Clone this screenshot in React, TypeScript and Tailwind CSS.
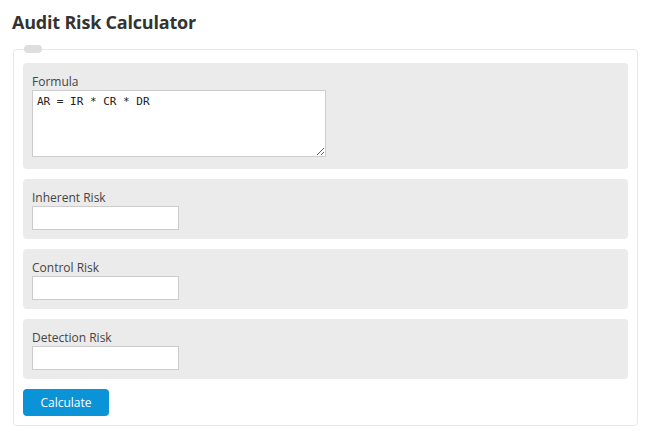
import React from "react";

const fields = ["Inherent Risk", "Control Risk", "Detection Risk"];

export default function App() {
    return (
        <div className="bg-white w-[650px] h-[441px] font-['Open_Sans',sans-serif] text-[#444]">
            <h1 className="pl-[12px] pt-[9px] text-[18px] leading-[26px] font-bold text-[#333] tracking-[-0.2px]">
                Audit Risk Calculator
            </h1>
            <div className="relative mt-[14px] ml-[13px] w-[625px] border border-[#e8e8e8] rounded-[4px] px-[9px] pt-[13px] pb-[9px]">
                <span className="absolute left-[10px] top-[-5px] w-[18px] h-[8px] rounded-full bg-[#dedede]"></span>
                <div className="flex flex-col gap-[10px]">
                    <div className="bg-[#ebebeb] rounded-[4px] px-[9px] pt-[10px] pb-[12px]">
                        <label className="block text-[12px] leading-[17px]">Formula</label>
                        <textarea
                            readOnly
                            className="block w-[294px] h-[67px] bg-white border border-[#ccc] px-[4px] pt-[3px] font-['DejaVu_Sans_Mono',monospace] text-[11px] leading-[16px] text-[#222] resize"
                            defaultValue="AR = IR * CR * DR"
                        />
                    </div>
                    {fields.map(name => (
                        <div key={name} className="bg-[#ebebeb] rounded-[4px] px-[9px] pt-[10px] pb-[9px]">
                            <label className="block text-[12px] leading-[17px]">{name}</label>
                            <input type="text" className="block w-[147px] h-[24px] bg-white border border-[#ccc]" />
                        </div>
                    ))}
                    <div>
                        <button className="w-[86px] h-[27px] rounded-[4px] bg-[#0b93d8] text-white text-[12px] leading-[27px]">
                            Calculate
                        </button>
                    </div>
                </div>
            </div>
        </div>
    );
}
